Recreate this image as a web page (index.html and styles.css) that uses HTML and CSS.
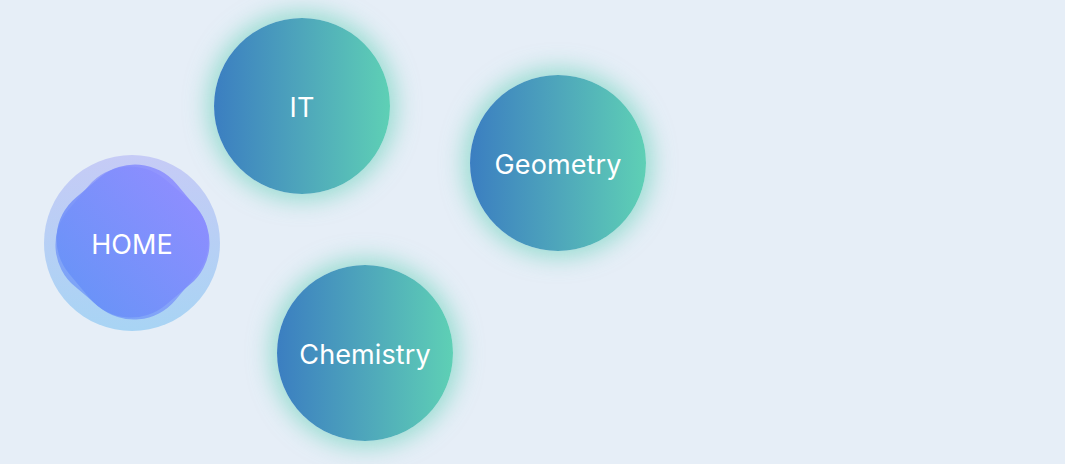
FILE: index.html
```html
<!DOCTYPE html>
<html>
<head>
<meta charset="utf-8">
<link rel="stylesheet" href="styles.css">
</head>
<body>
<div class="canvas">
  <div class="node home">
    <div class="blob blob-a"></div>
    <div class="blob blob-b"></div>
    <span class="label">HOME</span>
  </div>
  <div class="node topic it"><span class="label">IT</span></div>
  <div class="node topic geometry"><span class="label">Geometry</span></div>
  <div class="node topic chemistry"><span class="label">Chemistry</span></div>
</div>
</body>
</html>
```
FILE: styles.css
```css
html, body {
  margin: 0;
  padding: 0;
  background: #e6eef7;
}
.canvas {
  position: relative;
  width: 1065px;
  height: 464px;
  overflow: hidden;
  font-family: Inter, "Noto Sans", sans-serif;
}
.node {
  position: absolute;
  width: 176px;
  height: 176px;
  border-radius: 50%;
  display: flex;
  align-items: center;
  justify-content: center;
}
.label {
  position: relative;
  color: #ffffff;
  font-size: 27px;
  font-weight: 400;
  letter-spacing: 0.1px;
  line-height: 1;
  margin-top: 2px;
}
.topic {
  background: linear-gradient(90deg, #3b7ec1 0%, #4ea6bb 50%, #5ed0b5 100%);
  box-shadow: 0 0 22px 7px rgba(94, 208, 181, 0.55);
}
.it { left: 214px; top: 18px; }
.geometry { left: 470px; top: 75px; }
.chemistry { left: 277px; top: 265px; }
.home {
  left: 44px;
  top: 155px;
  background: linear-gradient(180deg, #c6cbf6 0%, #a8d4f4 100%);
}
.blob {
  position: absolute;
  left: 18px;
  top: 18px;
  width: 140px;
  height: 140px;
  border-radius: 54px;
  background: linear-gradient(180deg, #8a8bff 0%, #6890f8 100%);
}
.blob-a {
  transform: rotate(40deg);
  opacity: 0.7;
}
.blob-b {
  transform: translate(1px, -2px) rotate(50deg);
  opacity: 0.85;
}
```
